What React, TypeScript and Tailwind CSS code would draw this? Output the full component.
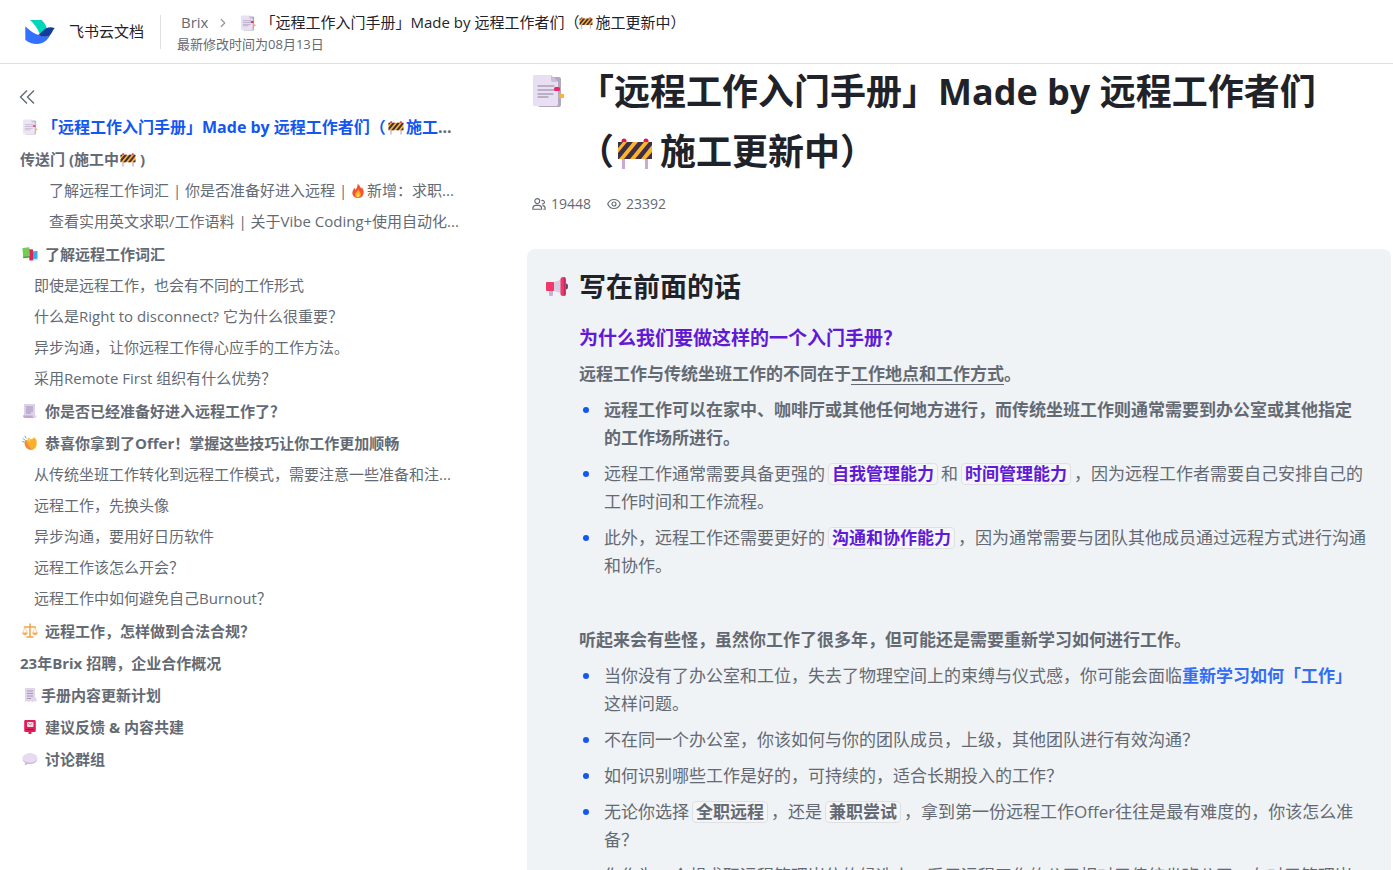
import React from 'react';
import { ChevronRight } from 'lucide-react';

type IconProps = { className?: string };

const LogoIcon = ({ className }: IconProps) => (
    <svg viewBox="0 0 30 24" className={className} aria-hidden="true">
        <path d="M5 0h11.5c2.600 2 4.400 5 5.300 8.200-1.900.9-4 2.700-7 5.800C12.500 8.500 9.300 3.600 5 0Z" fill="#00d6b9" />
        <path d="M0.500 6.500C4.500 10.500 11 15.500 20 16.500c2.500.2 4-.5 5.500-2C22.500 20.500 18 24 12 24 7.500 24 3.300 22.500.800 20.300.500 20 .300 19.600.300 19.200V6.700c0-.2.100-.300.200-.200Z" fill="#3370ff" />
        <path d="M29.700 8.200c-2.700-1.200-5.800-1.100-8.500.100-2.200 1-3.800 2.900-6.700 5.700-.4.400-.9.800-1.300 1.100 3 1.300 7.800 2.700 11 .7 2.700-1.800 3.100-5.400 5.500-7.600Z" fill="#133c9a" />
    </svg>
);

const CollapseIcon = ({ className }: IconProps) => (
    <svg viewBox="0 0 16 16" className={className} fill="none" stroke="currentColor" strokeWidth="1.400" aria-hidden="true">
        <path d="M8 1.500 1.500 8 8 14.500M15 1.500 8.500 8l6.500 6.500" />
    </svg>
);

const BookmarkDocIcon = ({ className }: IconProps) => (
    <svg viewBox="0 0 32 34" className={className} aria-hidden="true">
        <rect x="6" y="3" width="23" height="30" rx="2" fill="#b3a9bd" />
        <path d="M27 20h4a1 1 0 0 1 1 1v2a1 1 0 0 1-1 1h-4Z" fill="#f9b233" />
        <path d="M2 1h17l7 7v22a2 2 0 0 1-2 2H2a1 1 0 0 1-1-1V2a1 1 0 0 1 1-1Z" fill="#e9dff3" />
        <path d="M19 1v5a2 2 0 0 0 2 2h5Z" fill="#cdbbdc" />
        <path d="M6 12h16M6 16h16M6 20h15M6 23h10" stroke="#8d7f9c" strokeWidth="1" strokeLinecap="round" />
        <rect x="22" y="13" width="6" height="4" rx="1.500" fill="#f0246e" />
    </svg>
);

const BarrierIcon = ({ className }: IconProps) => (
    <svg viewBox="0 0 34 32" className={className} aria-hidden="true">
        <path d="M5.500 19v12M28.500 19v12" stroke="#c9a9d6" strokeWidth="3" />
        <circle cx="6" cy="3" r="2.500" fill="#e3165b" />
        <circle cx="28" cy="3" r="2.500" fill="#e3165b" />
        <rect x="0" y="4" width="34" height="17" rx="1" fill="#fcb32e" />
        <path d="M0 4h5L0 10ZM9 4h6L1 21H0v-6ZM20 4h6L12 21H6ZM31 4h3v3L23 21h-6ZM34 14v7h-6Z" fill="#3d2f45" />
    </svg>
);

const FireIcon = ({ className }: IconProps) => (
    <svg viewBox="0 0 16 16" className={className} aria-hidden="true">
        <path d="M7.500 0c3 1.500 3 4 4.200 5.300.5-.6.400-1.300.300-1.800C14 5.500 15 8 14.300 11c-.7 3-3 5-6.200 5S2 14 1.600 11C1.200 8 3 6.500 3.500 4.500c.8.500 1.300 1.200 1.500 2C6.700 4.800 7.800 2.500 7.500 0Z" fill="#f4512f" />
        <path d="M8.300 6c.3 2 2.900 3 3 5.800.1 2-1.300 3.700-3.300 3.700s-3.400-1.500-3.300-3.500C4.800 9.500 7.600 8.600 8.300 6Z" fill="#fda72c" />
        <path d="M8 10c.4 1.200 1.500 1.700 1.500 3.100 0 1-.6 1.700-1.500 1.700s-1.600-.7-1.600-1.700C6.400 11.800 7.500 11.300 8 10Z" fill="#ffd84a" />
    </svg>
);

const BooksIcon = ({ className }: IconProps) => (
    <svg viewBox="0 0 16 16" className={className} aria-hidden="true">
        <path d="M8 5.500 15.500 5v8.500L9 15Z" fill="#35aee2" />
        <path d="m9 13.800 6.500-1.300v1L9.300 15Z" fill="#d8ecf5" />
        <path d="m6 3 5 .5v10.800l-3.500.2Z" fill="#e0245e" />
        <path d="M.500 2 7.300 1.200 8 11 1.200 12Z" fill="#74cb55" />
        <path d="m1.200 11 6.800-1v1.200L1.500 12.300Z" fill="#3d9c3a" />
    </svg>
);

const PageIcon = ({ className }: IconProps) => (
    <svg viewBox="0 0 16 16" className={className} aria-hidden="true">
        <path d="M2 1h11v11.500h1.500c0 1.500-.8 2.500-2 2.500H3.500C2 15 1 14 1 12.500h1Z" fill="#ddd0ea" />
        <path d="M1 12.500h9.500c0 1.500.6 2.500 2 2.500h-9C2 15 1 14 1 12.500Z" fill="#bda9cd" />
        <path d="M4 4h7M4 6h7M4 8h7M4 10h5" stroke="#8f80a3" strokeWidth=".8" />
    </svg>
);

const ClapIcon = ({ className }: IconProps) => (
    <svg viewBox="0 0 16 16" className={className} aria-hidden="true">
        <path d="M1 3.500 2.800 5M3 1l1 2M.500 6.500 2.300 7" stroke="#4eb5e8" strokeWidth="1" strokeLinecap="round" />
        <path d="M6.500 2.500 9 4.500l3-1.800c1.200-.4 1.700.6 1.300 1.500.9-.2 1.300.600 1.200 1.300.7 4.500-.1 7.500-2.900 8.900-3 1.500-6 .2-7.800-2.300C2.300 10.200 2.500 8 3 6c.4-1.600 1.500-1.400 2-.6Z" fill="#fbb02c" />
        <path d="M5 6.500c.5 3 2 5.500 5 7.900-2.800.5-5-.7-6.400-2.800C2.500 9.700 2.700 7.700 3 6c.5-1 1.700-.6 2 .5Z" fill="#f08a3c" />
        <path d="M6.500 2.500 8.500 5l-1 2-2-3Z" fill="#ffd05b" />
    </svg>
);

const ScalesIcon = ({ className }: IconProps) => (
    <svg viewBox="0 0 16 16" className={className} aria-hidden="true">
        <path d="M8 1v12M2.500 4h11M5 14h6" stroke="#f3a14a" strokeWidth="1.500" strokeLinecap="round" />
        <path d="m3 4-2.300 6M3 4l2.300 6M13 4l-2.300 6M13 4l2.300 6" stroke="#f6bd7b" strokeWidth=".7" />
        <path d="M.3 9.500h5.400C5.500 11.500 4.500 12.200 3 12.200S.5 11.500.3 9.500ZM10.300 9.500h5.400c-.2 2-1.200 2.700-2.700 2.700s-2.500-.7-2.700-2.700Z" fill="#f5ac58" />
    </svg>
);

const ReceiptIcon = ({ className }: IconProps) => (
    <svg viewBox="0 0 16 16" className={className} aria-hidden="true">
        <path d="M3 1h10v9l1.500 2v3l-2-1-2 1-2-1-2 1-2-1L3 15Z" fill="#e0d5ea" />
        <path d="M5 4h6M5 6.500h6M5 9h6M5 11.500h4" stroke="#9a8cab" strokeWidth=".8" />
    </svg>
);

const PostboxIcon = ({ className }: IconProps) => (
    <svg viewBox="0 0 16 16" className={className} aria-hidden="true">
        <path d="M3.500 1h9a1.300 1.300 0 0 1 1.300 1.300v9.400a1.300 1.300 0 0 1-1.300 1.300H9.500v2h-3v-2h-3a1.300 1.300 0 0 1-1.300-1.300V2.300A1.300 1.300 0 0 1 3.500 1Z" fill="#e21e59" />
        <rect x="5" y="3" width="6.500" height="5" rx=".8" fill="#f3dbe9" />
        <path d="m6 4 2.200 2 2.300-2" stroke="#a56b91" strokeWidth=".8" fill="none" />
        <path d="M4.500 10.500h7" stroke="#9c1541" strokeWidth="1" />
    </svg>
);

const BubbleIcon = ({ className }: IconProps) => (
    <svg viewBox="0 0 16 16" className={className} aria-hidden="true">
        <path d="M8 2.500c4 0 7.300 2.200 7.300 5.200 0 3.100-3.300 5.300-7.300 5.300-.8 0-1.500-.1-2.200-.2-1 .9-2.200 1.300-3.500 1.200.7-.7 1-1.500 1-2.300C1.600 10.800.7 9.400.7 7.700.7 4.700 4 2.500 8 2.500Z" fill="#c8b6d9" />
        <path d="M8 2.500c4 0 7.300 2 7.300 4.600S12 11.800 8 11.800.7 9.700.7 7.100 4 2.500 8 2.500Z" fill="#e6dbf1" />
    </svg>
);

const MegaphoneIcon = ({ className }: IconProps) => (
    <svg viewBox="0 0 24 22" className={className} aria-hidden="true">
        <path d="M4 14h4v5a1 1 0 0 1-1 1H5a1 1 0 0 1-1-1Z" fill="#c4b3d4" />
        <path d="M8 6c4-.5 7-1.500 9-4v17c-2-2.500-5-3.700-9-4Z" fill="#d9cbe4" />
        <rect x="1" y="6" width="8" height="9" rx="1" fill="#f0386b" />
        <ellipse cx="21" cy="10.500" rx="2" ry="3" fill="#5b4a66" />
        <rect x="15.500" y="1" width="5.500" height="19" rx="2.500" fill="#f0386b" />
        <path d="M19.500 1.500v18" stroke="#c9285c" strokeWidth="1.500" />
    </svg>
);

const VisitorsIcon = ({ className }: IconProps) => (
    <svg viewBox="0 0 16 16" className={className} fill="none" stroke="currentColor" strokeWidth="1.300" aria-hidden="true">
        <circle cx="6" cy="4.700" r="2.800" />
        <path d="M1 14v-1.500A3.500 3.500 0 0 1 4.500 9.500h3a3.500 3.500 0 0 1 3.500 3V14Z" strokeLinejoin="round" />
        <path d="M10.800 4.500a2 2 0 1 1 .500 3.200M12 9.800c1.800.1 2.900 1.300 3 3V14h-2" />
    </svg>
);

const EyeIcon = ({ className }: IconProps) => (
    <svg viewBox="0 0 16 16" className={className} fill="none" stroke="currentColor" strokeWidth="1.300" aria-hidden="true">
        <path d="M8 2.800c3.200 0 5.700 1.700 7.200 5.200-1.500 3.500-4 5.200-7.200 5.200S2.300 11.500.8 8C2.300 4.500 4.800 2.800 8 2.800Z" />
        <circle cx="8" cy="8" r="2.300" />
    </svg>
);

type TocEntry = {
    text: React.ReactNode;
    icon?: (props: IconProps) => React.ReactElement;
    tight?: boolean;
    deep?: boolean;
    children?: React.ReactNode[];
};

const toc: TocEntry[] = [
    {
        text: <>传送门 (施工中<BarrierIcon className="inline-block w-4 h-3.5 ml-px mr-1 align-[-2px]" />)</>,
        deep: true,
        children: [
            <>了解远程工作词汇 | 你是否准备好进入远程 | <FireIcon className="inline-block w-3.5 h-4 mr-0.5 align-[-3px]" />新增：求职...</>,
            '查看实用英文求职/工作语料 | 关于Vibe Coding+使用自动化...',
        ],
    },
    {
        text: '了解远程工作词汇',
        icon: BooksIcon,
        children: [
            '即使是远程工作，也会有不同的工作形式',
            '什么是Right to disconnect? 它为什么很重要？',
            '异步沟通，让你远程工作得心应手的工作方法。',
            '采用Remote First 组织有什么优势？',
        ],
    },
    { text: '你是否已经准备好进入远程工作了？', icon: PageIcon },
    {
        text: '恭喜你拿到了Offer！掌握这些技巧让你工作更加顺畅',
        icon: ClapIcon,
        children: [
            '从传统坐班工作转化到远程工作模式，需要注意一些准备和注...',
            '远程工作，先换头像',
            '异步沟通，要用好日历软件',
            '远程工作该怎么开会？',
            '远程工作中如何避免自己Burnout？',
        ],
    },
    { text: '远程工作，怎样做到合法合规？', icon: ScalesIcon },
    { text: '23年Brix 招聘，企业合作概况' },
    { text: '手册内容更新计划', icon: ReceiptIcon, tight: true },
    { text: '建议反馈 & 内容共建', icon: PostboxIcon },
    { text: '讨论群组', icon: BubbleIcon },
];

const TocItem = ({ entry }: { entry: TocEntry }) => {
    const Icon = entry.icon;
    return (
        <li>
            <a href="#" className="flex items-center h-8 font-bold">
                {Icon && <Icon className={entry.tight ? 'w-4 h-4 ml-0.5 mr-[3px] shrink-0' : 'w-4 h-4 ml-0.5 mr-[7px] shrink-0'} />}
                <span>{entry.text}</span>
            </a>
            {entry.children && (
                <ul className={entry.deep ? 'pl-[29px] pb-px' : 'pl-3.5 pb-px'}>
                    {entry.children.map((child, idx) => (
                        <li key={idx}>
                            <a href="#" className="block leading-[31px]">{child}</a>
                        </li>
                    ))}
                </ul>
            )}
        </li>
    );
};

const Chip = ({ purple, children }: { purple?: boolean; children: React.ReactNode }) => (
    <span
        className={
            purple
                ? 'inline-block mx-[3px] px-[3px] border border-[#dee0e3] rounded bg-[#f3f5f7] font-bold text-[#6019d5] leading-5'
                : 'inline-block mx-[3px] px-[3px] border border-[#dee0e3] rounded bg-[#f3f5f7] font-bold leading-5'
        }
    >
        {children}
    </span>
);

const Bullet = ({ children }: { children: React.ReactNode }) => (
    <li className="flex">
        <span className="w-1.5 h-1.5 mt-[11px] ml-1 mr-[15px] rounded-full bg-[#1456f0] shrink-0" />
        <p className="min-w-0">{children}</p>
    </li>
);

const Header = () => (
    <header className="flex items-center h-16 shrink-0 pl-[25px] border-b border-[#dee0e3] bg-white relative z-10">
        <a href="#" className="flex items-center text-[15px] text-[#1f2329]">
            <LogoIcon className="w-[30px] h-6 mr-3.5" />
            飞书云文档
        </a>
        <div className="w-px h-[34px] mx-4 bg-[#dee0e3]" />
        <div>
            <nav className="flex items-center h-6 px-1 text-[15px] text-[#1f2329]">
                <a href="#" className="text-[#646a73]">Brix</a>
                <ChevronRight className="w-3.5 h-3.5 mx-2 text-[#8f959e]" />
                <BookmarkDocIcon className="w-4 h-4 ml-0.5 mr-1" />
                <span>「远程工作入门手册」Made by 远程工作者们（<BarrierIcon className="inline-block w-3.5 h-3 mr-0.5 align-[-1px]" />施工更新中）</span>
            </nav>
            <p className="text-[13px] leading-[18px] text-[#646a73]">最新修改时间为08月13日</p>
        </div>
    </header>
);

const Sidebar = () => (
    <aside className="w-[457px] shrink-0 pl-5 pt-[19px] text-[15px] whitespace-nowrap text-[#646a73]">
        <button type="button" aria-label="收起目录" className="flex items-center h-7 -ml-px">
            <CollapseIcon className="w-4 h-4" />
        </button>
        <a href="#" className="flex items-center h-8 text-base font-bold">
            <BookmarkDocIcon className="w-4 h-4 ml-0.5 mr-1 shrink-0 opacity-80" />
            <span>
                <span className="text-[#1456f0]">
                    「远程工作入门手册」Made by 远程工作者们（<BarrierIcon className="inline-block w-4 h-3.5 mx-0.5 align-[-2px]" />施工
                </span>
                ...
            </span>
        </a>
        <ul>
            {toc.map((entry, idx) => (
                <TocItem key={idx} entry={entry} />
            ))}
        </ul>
    </aside>
);

const Article = () => (
    <main className="flex-1 min-w-0 ml-[70px] pr-0.5">
        <h1 className="flex -mt-0.5 pl-[5px] text-4xl leading-[60px] font-bold text-[#1f2329]">
            <BookmarkDocIcon className="w-8 h-[34px] mt-3 mr-3.5 shrink-0" />
            <span>
                「远程工作入门手册」Made by 远程工作者们
                <span className="inline-block">（<BarrierIcon className="inline-block w-[34px] h-8 ml-1 mr-2 align-[-5px]" />施工更新中）</span>
            </span>
        </h1>
        <div className="flex items-center gap-4 h-6 mt-2.5 pl-[5px] text-sm text-[#646a73]">
            <span className="flex items-center gap-[5px]"><VisitorsIcon className="w-3.5 h-3.5" />19448</span>
            <span className="flex items-center gap-[5px]"><EyeIcon className="w-3.5 h-3.5" />23392</span>
        </div>

        <section className="mt-[33px] pt-[19px] pl-[18px] pr-4 pb-8 rounded-lg bg-[#f0f3f5] text-[17px] leading-7 text-[#646a73]">
            <h2 className="flex items-center h-[38px] text-[27px] font-bold text-[#1f2329]">
                <MegaphoneIcon className="w-6 h-[22px] mr-2.5" />
                写在前面的话
            </h2>
            <div className="flex flex-col gap-2 mt-[18px] pl-[34px]">
                <h3 className="text-[19px] leading-7 font-bold text-[#6019d5]">为什么我们要做这样的一个入门手册？</h3>
                <p className="font-bold">远程工作与传统坐班工作的不同在于<u className="underline-offset-4">工作地点和工作方式</u>。</p>
                <ul className="flex flex-col gap-2">
                    <Bullet>
                        <b>远程工作可以在家中、咖啡厅或其他任何地方进行，而传统坐班工作则通常需要到办公室或其他指定<br />的工作场所进行。</b>
                    </Bullet>
                    <Bullet>
                        远程工作通常需要具备更强的<Chip purple>自我管理能力</Chip>和<Chip purple>时间管理能力</Chip>，因为远程工作者需要自己安排自己的<br />工作时间和工作流程。
                    </Bullet>
                    <Bullet>
                        此外，远程工作还需要更好的<Chip purple>沟通和协作能力</Chip>，因为通常需要与团队其他成员通过远程方式进行沟通<br />和协作。
                    </Bullet>
                </ul>
                <p className="h-[30px]" />
                <p className="font-bold">听起来会有些怪，虽然你工作了很多年，但可能还是需要重新学习如何进行工作。</p>
                <ul className="flex flex-col gap-2">
                    <Bullet>
                        当你没有了办公室和工位，失去了物理空间上的束缚与仪式感，你可能会面临<b className="text-[#336df4]">重新学习如何「工作」</b><br />这样问题。
                    </Bullet>
                    <Bullet>不在同一个办公室，你该如何与你的团队成员，上级，其他团队进行有效沟通？</Bullet>
                    <Bullet>如何识别哪些工作是好的，可持续的，适合长期投入的工作？</Bullet>
                    <Bullet>
                        无论你选择<Chip>全职远程</Chip>，还是<Chip>兼职尝试</Chip>，拿到第一份远程工作Offer往往是最有难度的，你该怎么准<br />备？
                    </Bullet>
                    <Bullet>
                        你作为一个想求职远程管理岗位的候选人，采用远程工作的公司相对于传统坐班公司，在对于管理岗<br />位的要求上有什么不同？
                    </Bullet>
                </ul>
            </div>
        </section>
    </main>
);

export default function App() {
    return (
        <div className="flex flex-col h-screen overflow-hidden bg-white font-['Open_Sans','Noto_Sans_CJK_SC',sans-serif]">
            <Header />
            <div className="flex flex-1 min-h-0">
                <Sidebar />
                <Article />
            </div>
        </div>
    );
}
